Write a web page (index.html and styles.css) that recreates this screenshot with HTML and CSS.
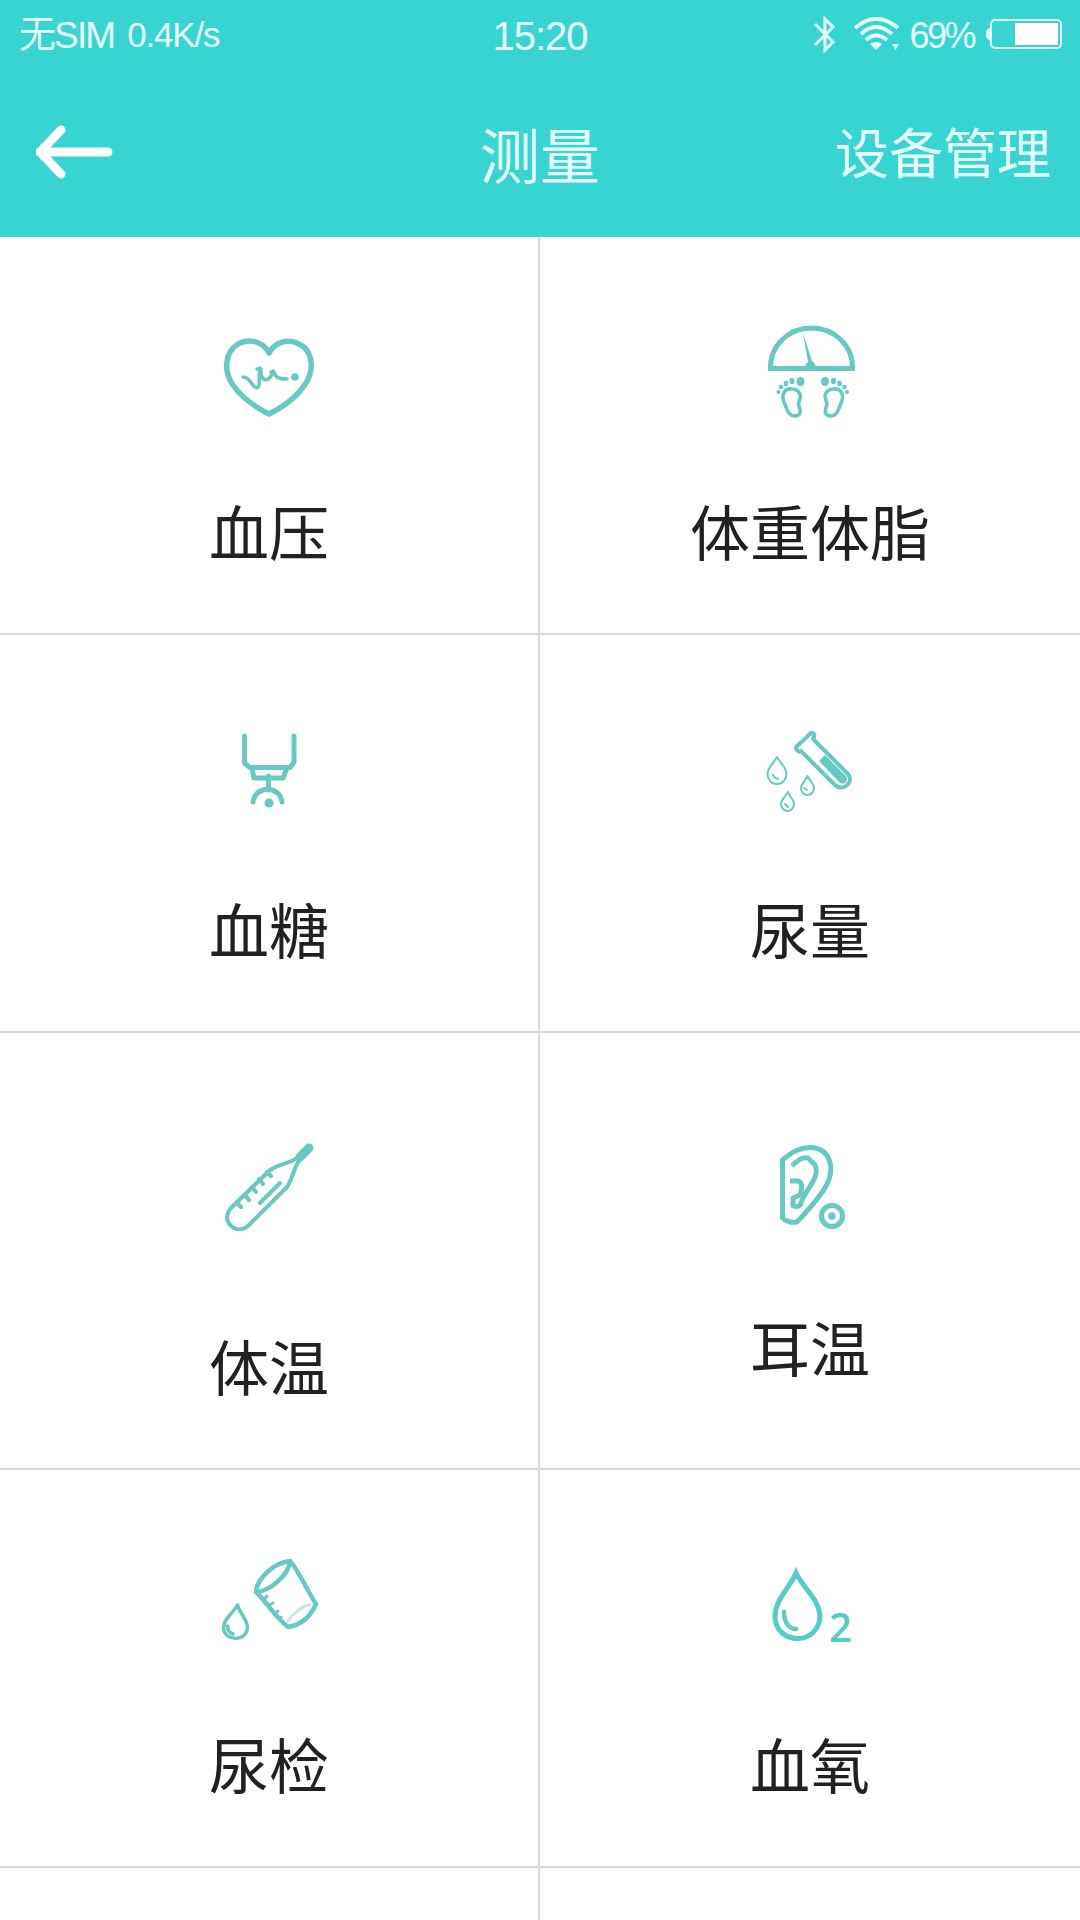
FILE: index.html
```html
<!DOCTYPE html>
<html lang="zh-CN">
<head>
    <meta charset="UTF-8">
    <title>测量</title>
    <link rel="stylesheet" href="styles.css">
</head>
<body>
<div class="header">
    <div class="status">
        <div class="status-left"><span class="sim">无SIM</span><span class="speed">0.4K/s</span></div>
        <div class="time">15:20</div>
        <div class="status-right">
            <svg class="bluetooth" width="24" height="42" viewBox="0 0 24 42" fill="none" stroke="#e6ffff" stroke-width="3">
                <path d="M2 10 L20 28 L12 36 V5 L20 13 L2 31"/>
            </svg>
            <svg class="wifi" width="46" height="36" viewBox="0 0 46 36">
                <g fill="none" stroke="#e6ffff" stroke-width="4">
                    <path d="M1 11 Q22 -7 44 11"/>
                    <path d="M7 17 Q22 3 38 17"/>
                    <path d="M12 23 Q22 14 33 23"/>
                </g>
                <path fill="#e6ffff" d="M16 27 Q22 23 28 27 L22 33Z M38 27 H45 L41.500 33Z"/>
            </svg>
            <span class="percent">69%</span>
            <svg class="battery" width="78" height="32" viewBox="0 0 78 32">
                <path fill="#e6ffff" d="M5 9 Q1 9 1 15 Q1 21 5 21Z"/>
                <rect x="6" y="1" width="70" height="28" rx="4" fill="none" stroke="#e6ffff" stroke-width="2"/>
                <rect x="30" y="4" width="43" height="22" fill="#fff"/>
            </svg>
        </div>
    </div>
    <div class="nav">
        <a href="javascript:;" class="back">
            <svg width="78" height="54" viewBox="0 0 78 54" fill="none" stroke="#fff" stroke-width="9" stroke-linecap="round" stroke-linejoin="round">
                <path d="M25 5 L4 27 L25 49 M4 27 H72"/>
            </svg>
        </a>
        <h1 class="title">测量</h1>
        <a href="javascript:;" class="manage">设备管理</a>
    </div>
</div>
<div class="list">
    <a href="javascript:;" class="item">
        <svg class="icon" width="140" height="130" viewBox="0 0 140 130">
            <path stroke-width="5.5" d="M70 43 C63 29 47 29 39 34 C26 42 24 61 34 75 C43 88 56 97 70 104 C84 97 98 87 107 73 C116 58 113 40 100 34 C89 28 76 32 70 43Z"/>
            <path stroke-width="3.500" d="M44 67 C52 67 53 78 58 78 C62 76 59 68 61 58 M58 59 H62 C61 73 71 73 74 61 M72 62 H75 C76 67 79 69 88 69"/>
            <circle class="fill" cx="96" cy="67" r="3.800"/>
        </svg>
        <span>血压</span>
    </a>
    <a href="javascript:;" class="item">
        <svg class="icon" width="140" height="130" viewBox="0 0 140 130">
            <path stroke-width="5" stroke-linejoin="miter" d="M30.500 58.500 C30 35 49 18 71.500 18 C94 18 113 35 112.500 58.500Z"/>
            <path class="fill" d="M63 23 L72 51 Q76 54 76 58 H65 Q65 54 68 52Z"/>
            <g id="foot">
                <path stroke-width="3.500" d="M52 79 C45 78 41 84 44 92 C47 99 48 106 55 106 C61 106 61 101 59 96 C57 92 62 89 60 84 C58 80 56 79 52 79Z"/>
                <ellipse class="fill" cx="60.500" cy="71.500" rx="4" ry="4.500"/>
                <ellipse class="fill" cx="52" cy="71" rx="2.500" ry="3.200"/>
                <ellipse class="fill" cx="46" cy="73.500" rx="2.300" ry="2.900"/>
                <circle class="fill" cx="41" cy="77" r="2.300"/>
                <circle class="fill" cx="38.500" cy="82" r="2"/>
            </g>
            <use href="#foot" transform="translate(145.500 0) scale(-1 1)"/>
        </svg>
        <span>体重体脂</span>
    </a>
    <a href="javascript:;" class="item second">
        <svg class="icon" width="140" height="120" viewBox="0 0 140 120">
            <path stroke-width="5" d="M45.500 26 V53 L51 57.500 H91 L95 52 V26"/>
            <path stroke-width="5" d="M53 58 L55 68 H84 L88 58 M69.500 66 V80 M54 92 C56 75 81 75 83 92"/>
            <circle class="fill" cx="70" cy="93" r="4.500"/>
        </svg>
        <span>血糖</span>
    </a>
    <a href="javascript:;" class="item second">
        <svg class="icon" width="140" height="120" viewBox="0 0 140 120">
            <path stroke-width="4" d="M71 23 C75 23 75 26 73 29 L108 64 C115 73 102 82 95 75 L61 41 C58 43 56 39 56 37Z"/>
            <path class="fill" d="M79 51 L85 45 L105 65 C110 70 104 77 99 72Z"/>
            <path stroke-width="2" d="M37 47 C33 54 27.500 58 27.500 64 A9.500 10 0 0 0 46.500 64 C46.500 58 41 54 37 47Z M33 65 Q34 68 38 69"/>
            <path stroke-width="2" d="M67.500 66 C65 71 61 74 61 78 A6.500 7 0 0 0 74 78 C74 74 70 71 67.500 66Z M64 78 L67 80"/>
            <path stroke-width="2" d="M48 82 C45 87 41 90 41 94 A6.500 7 0 0 0 54 94 C54 90 50 87 48 82Z M45 94 L48 97"/>
        </svg>
        <span>尿量</span>
    </a>
    <a href="javascript:;" class="item third">
        <svg class="icon" width="140" height="130" viewBox="0 0 140 130">
            <path stroke-width="4" d="M98 38 C90 44 78 44 70 51 L32 88 C20 101 38 117 50 105 L88 67 C94 58 95 47 100 41"/>
            <path stroke-width="9" d="M101 37 L110 28"/>
            <path stroke-width="4" d="M38 83 L42 87 M46 75 L50 80 M53 67 L57 72 M60 59 L64 64 M68 52 L72 56 M61 83 L81 63"/>
        </svg>
        <span>体温</span>
    </a>
    <a href="javascript:;" class="item third ear">
        <svg class="icon" width="140" height="130" viewBox="0 0 140 130">
            <path stroke-width="5" d="M42.500 40 C53 31 61 27 72 27.500 C90 29 96 48 86 66 C79 79 67 91 57 102 C51 103 45 101 42.500 98Z"/>
            <path stroke-width="5" stroke-linecap="butt" d="M52 46 C58 40 62 37 68 38 L75 45 C81 57 65 70 61 83 C60 87 56 87 53 86 V78 L60 75 C63 67 62 62 58 61 H50"/>
            <circle stroke-width="5" cx="92" cy="96" r="10.500"/>
            <circle class="fill" cx="92" cy="96" r="3.800"/>
        </svg>
        <span>耳温</span>
    </a>
    <a href="javascript:;" class="item fourth">
        <svg class="icon" width="140" height="120" viewBox="0 0 140 120">
            <path stroke-width="4.500" d="M57 51 C58 37 75 22 91 20 C90 34 71 50 57 51Z M57 51 C66 59 76 76 89 86 C101 84 111 77 117 63 C109 51 102 34 92 21"/>
            <path stroke-width="3" opacity=".4" d="M89 80 C93 74 102 65 111 64"/>
            <path stroke-width="3" d="M65 59 L68 55 M69 65 L74 62 M76 73 L79 70 M80 78 L82 76"/>
            <path stroke-width="3.500" d="M38.500 64 C34 72 24.500 78 24.500 87 C25.500 101 48.500 101 48.500 86 C47.500 77 40.500 72 38.500 64Z M28.500 85 Q28.500 91 34 93"/>
        </svg>
        <span>尿检</span>
    </a>
    <a href="javascript:;" class="item fourth">
        <svg class="icon bright" width="140" height="120" viewBox="0 0 140 120">
            <path stroke-width="5" stroke-linejoin="miter" d="M56 32 C50 47 35 58 35 76 C36 105 80 105 80 74 C78 57 63 47 56 32Z"/>
            <path class="shine" stroke-width="4.500" d="M44 71 C44 80 48 88 56 88"/>
            <text x="89" y="101">2</text>
        </svg>
        <span>血氧</span>
    </a>
    <div class="item"></div>
    <div class="item"></div>
</div>
</body>
</html>
```

FILE: styles.css
```css
*{
    margin: 0;
    padding: 0;
    box-sizing: border-box;
}
body{
    height: 1920px;
    overflow: hidden;
    background-color: #fff;
    font-family: "Liberation Sans", "Noto Sans CJK SC", sans-serif;
}
a{
    color: inherit;
    text-decoration: none;
}
svg{
    display: block;
    flex: none;
}
.header{
    height: 237px;
    background-color: #38d4d1;
    color: #e6ffff;
}
.status{
    height: 70px;
    padding: 0 17px 0 19px;
    display: grid;
    grid-template-columns: 1fr auto 1fr;
    align-items: center;
    font-size: 36px;
    line-height: 50px;
}
.status-left{
    display: flex;
    align-items: center;
    gap: 13px;
}
.sim{
    font-size: 37px;
    letter-spacing: -1.900px;
    padding-top: 2px;
}
.speed{
    font-size: 35px;
    letter-spacing: -1.200px;
}
.time{
    font-size: 40px;
    letter-spacing: -1px;
    margin-right: 2px;
    padding-top: 1px;
}
.status-right{
    display: flex;
    justify-content: flex-end;
    align-items: center;
}
.wifi{
    margin-left: 17px;
}
.percent{
    margin: 0 11px 0 9px;
    padding-top: 1px;
    letter-spacing: -2.500px;
}
.nav{
    height: 167px;
    padding: 0 29px 0 36px;
    display: grid;
    grid-template-columns: 1fr auto 1fr;
    align-items: center;
}
.back{
    padding-bottom: 4px;
}
.title{
    font-size: 60px;
    font-weight: 400;
    line-height: 80px;
    margin: 10px 7px 0 0;
}
.manage{
    justify-self: end;
    font-size: 54px;
    line-height: 80px;
    padding-top: 3px;
}
.list{
    display: grid;
    grid-template-columns: 540px 540px;
    grid-template-rows: 398px 398px 437px 398px 60px;
}
.item{
    display: flex;
    flex-direction: column;
    align-items: center;
    padding-top: 73px;
    border-bottom: 2px solid #d9d9d9;
    color: #212121;
    font-size: 60px;
    line-height: 80px;
}
.item:nth-child(odd){
    border-right: 2px solid #d9d9d9;
}
.item span{
    margin-top: 56px;
}
.second{
    padding-top: 75px;
}
.second span{
    margin-top: 64px;
}
.third{
    padding-top: 87px;
}
.third span{
    margin-top: 81px;
}
.ear span{
    margin-top: 62px;
}
.fourth{
    padding-top: 71px;
}
.fourth span{
    margin-top: 68px;
}
.icon{
    fill: none;
    stroke: #67c9c2;
    stroke-linecap: round;
    stroke-linejoin: round;
}
.icon .fill{
    fill: #67c9c2;
    stroke: none;
}
.bright{
    stroke: #54cdc6;
}
.bright .shine{
    stroke: #67c9c2;
}
.bright text{
    fill: #54cdc6;
    stroke: none;
    font: 600 40px "Open Sans", sans-serif;
}
```
